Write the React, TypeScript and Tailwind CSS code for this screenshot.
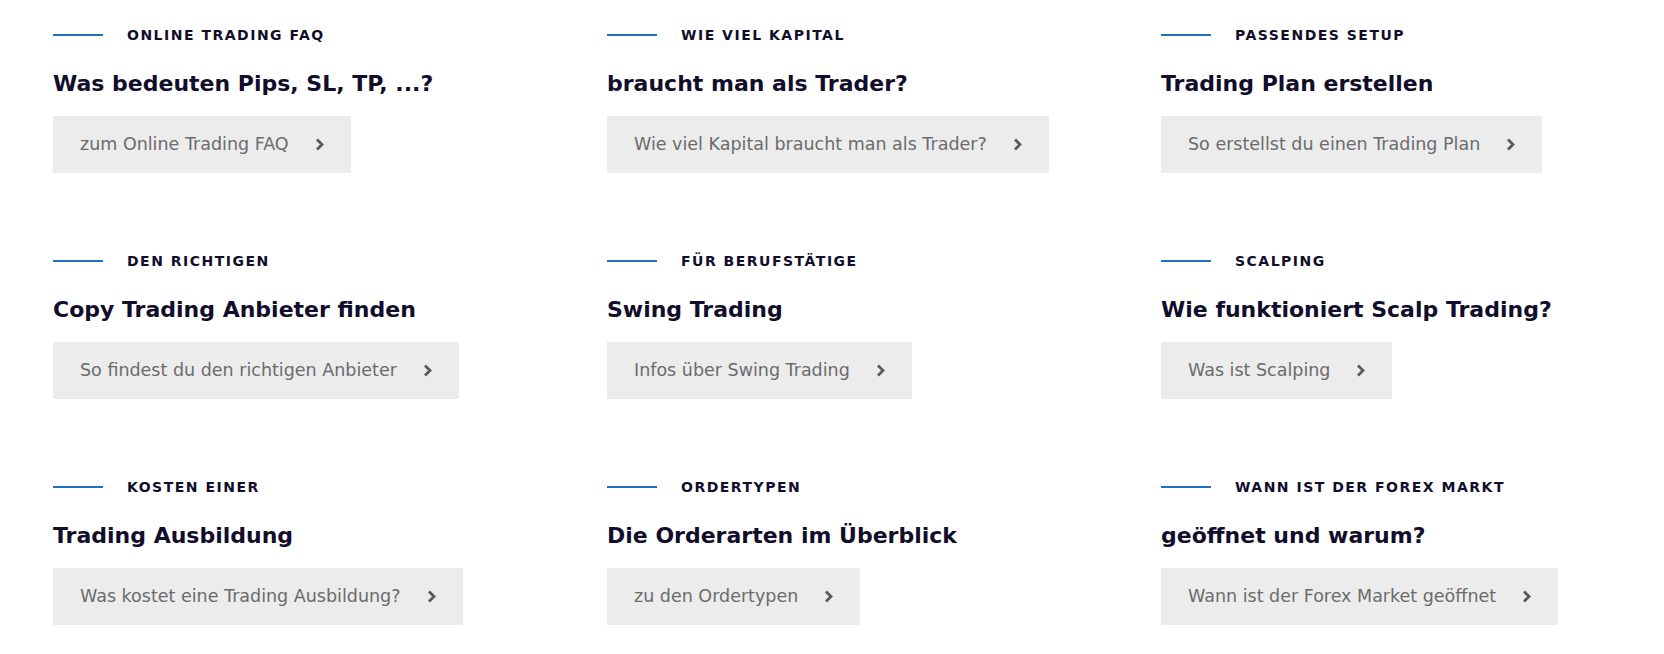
const items = [
  { label: "ONLINE TRADING FAQ", title: "Was bedeuten Pips, SL, TP, ...?", link: "zum Online Trading FAQ" },
  { label: "WIE VIEL KAPITAL", title: "braucht man als Trader?", link: "Wie viel Kapital braucht man als Trader?" },
  { label: "PASSENDES SETUP", title: "Trading Plan erstellen", link: "So erstellst du einen Trading Plan" },
  { label: "DEN RICHTIGEN", title: "Copy Trading Anbieter finden", link: "So findest du den richtigen Anbieter" },
  { label: "FÜR BERUFSTÄTIGE", title: "Swing Trading", link: "Infos über Swing Trading" },
  { label: "SCALPING", title: "Wie funktioniert Scalp Trading?", link: "Was ist Scalping" },
  { label: "KOSTEN EINER", title: "Trading Ausbildung", link: "Was kostet eine Trading Ausbildung?" },
  { label: "ORDERTYPEN", title: "Die Orderarten im Überblick", link: "zu den Ordertypen" },
  { label: "WANN IST DER FOREX MARKT", title: "geöffnet und warum?", link: "Wann ist der Forex Market geöffnet" },
]

function Chevron() {
  return (
    <svg width="9" height="13" viewBox="0 0 9 13" className="shrink-0">
      <path d="M2 1.5 L7 6.5 L2 11.5" fill="none" stroke="#5a5a5a" strokeWidth="2.8" strokeLinejoin="miter" />
    </svg>
  )
}

function Card({ label, title, link }: { label: string; title: string; link: string }) {
  return (
    <div className="flex flex-col items-start">
      <div className="flex items-center gap-[24px] h-[20px]">
        <span className="block w-[50px] h-[2px] bg-[#1f70c1]" />
        <span className="text-[14px] font-semibold tracking-[1.5px] text-[#110d2b]">{label}</span>
      </div>
      <h3 className="mt-[24px] text-[22px] leading-[30px] font-bold text-[#110d2b]">{title}</h3>
      <a
        href="#"
        className="mt-[17px] inline-flex items-center gap-[26px] h-[57px] px-[27px] bg-[#ececec] text-[17.5px] text-[#6b6b6b]"
      >
        <span>{link}</span>
        <Chevron />
      </a>
    </div>
  )
}

export default function App() {
  return (
    <div className="w-[1664px] h-[654px] bg-white pl-[53px] pt-[25px]" style={{ fontFamily: '"DejaVu Sans", sans-serif' }}>
      <div className="grid grid-cols-[repeat(3,554px)] gap-y-[78px]">
        {items.map((it) => (
          <Card key={it.label} {...it} />
        ))}
      </div>
    </div>
  )
}
